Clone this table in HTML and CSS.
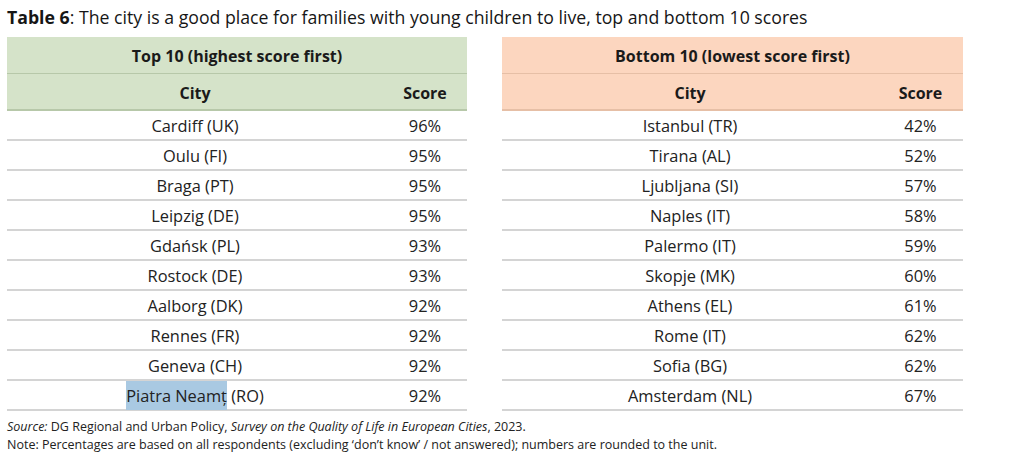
FILE: index.html
```html
<!DOCTYPE html>
<html lang="en">
<head>
<meta charset="utf-8">
<link rel="stylesheet" href="styles.css">
</head>
<body>
<div class="page">
  <h1 class="title"><b>Table 6</b>: The city is a good place for families with young children to live, top and bottom 10 scores</h1>
  <div class="tables">
    <table class="tbl top">
      <colgroup><col class="col-city"><col class="col-score"></colgroup>
      <thead>
        <tr class="h1"><th colspan="2">Top 10 (highest score first)</th></tr>
        <tr class="h2"><th>City</th><th>Score</th></tr>
      </thead>
      <tbody>
        <tr><td>Cardiff (UK)</td><td>96%</td></tr>
        <tr><td>Oulu (FI)</td><td>95%</td></tr>
        <tr><td>Braga (PT)</td><td>95%</td></tr>
        <tr><td>Leipzig (DE)</td><td>95%</td></tr>
        <tr><td>Gdańsk (PL)</td><td>93%</td></tr>
        <tr><td>Rostock (DE)</td><td>93%</td></tr>
        <tr><td>Aalborg (DK)</td><td>92%</td></tr>
        <tr><td>Rennes (FR)</td><td>92%</td></tr>
        <tr><td>Geneva (CH)</td><td>92%</td></tr>
        <tr><td><span class="sel">Piatra Neamț</span> (RO)</td><td>92%</td></tr>
      </tbody>
    </table>
    <table class="tbl bottom">
      <colgroup><col class="col-city"><col class="col-score"></colgroup>
      <thead>
        <tr class="h1"><th colspan="2">Bottom 10 (lowest score first)</th></tr>
        <tr class="h2"><th>City</th><th>Score</th></tr>
      </thead>
      <tbody>
        <tr><td>Istanbul (TR)</td><td>42%</td></tr>
        <tr><td>Tirana (AL)</td><td>52%</td></tr>
        <tr><td>Ljubljana (SI)</td><td>57%</td></tr>
        <tr><td>Naples (IT)</td><td>58%</td></tr>
        <tr><td>Palermo (IT)</td><td>59%</td></tr>
        <tr><td>Skopje (MK)</td><td>60%</td></tr>
        <tr><td>Athens (EL)</td><td>61%</td></tr>
        <tr><td>Rome (IT)</td><td>62%</td></tr>
        <tr><td>Sofia (BG)</td><td>62%</td></tr>
        <tr><td>Amsterdam (NL)</td><td>67%</td></tr>
      </tbody>
    </table>
  </div>
  <div class="notes">
    <p><i>Source:</i> DG Regional and Urban Policy, <i>Survey on the Quality of Life in European Cities</i>, 2023.</p>
    <p>Note: Percentages are based on all respondents (excluding ‘don’t know’ / not answered); numbers are rounded to the unit.</p>
  </div>
</div>
</body>
</html>
```
FILE: styles.css
```css
html, body {
  margin: 0;
  padding: 0;
  background: #ffffff;
}
body {
  font-family: "Open Sans", "Noto Sans", sans-serif;
  color: #1a1a1a;
}
.page {
  padding: 6px 7px 0 7px;
}
.title {
  margin: 0;
  font-size: 17.7px;
  font-weight: 400;
  line-height: 22px;
  height: 31px;
  color: #161616;
  white-space: nowrap;
}
.title b {
  font-weight: 700;
}
.tables {
  display: flex;
  gap: 35px;
}
.tbl {
  border-collapse: collapse;
  width: 460px;
  table-layout: fixed;
  font-size: 16.4px;
}
.tbl.bottom {
  width: 461px;
}
.col-city {
  width: 376px;
}
.tbl th, .tbl td {
  padding: 0;
  text-align: center;
  white-space: nowrap;
}
.tbl th {
  font-size: 16px;
  font-weight: 700;
  color: #1a1a1a;
  padding-top: 2px;
}
.tbl .h1 th {
  height: 34px;
  border-bottom: 1px solid #b7c8a9;
}
.tbl .h2 th {
  height: 33px;
  border-bottom: 2px solid #b7c8a9;
}
.tbl.top thead tr {
  background: #d5e3c9;
}
.tbl.bottom thead tr {
  background: #fcd6bf;
}
.tbl.bottom .h1 th,
.tbl.bottom .h2 th {
  border-bottom-color: #e6bfa6;
}
.tbl td {
  height: 28px;
  border-bottom: 2px solid #d4d4d4;
  color: #222222;
}
.sel {
  background: #a9c9e2;
  padding: 3px 0;
}
.notes {
  margin-top: 7px;
  font-size: 12.5px;
  line-height: 18px;
  color: #222222;
}
.notes p {
  margin: 0;
  white-space: nowrap;
}
```
